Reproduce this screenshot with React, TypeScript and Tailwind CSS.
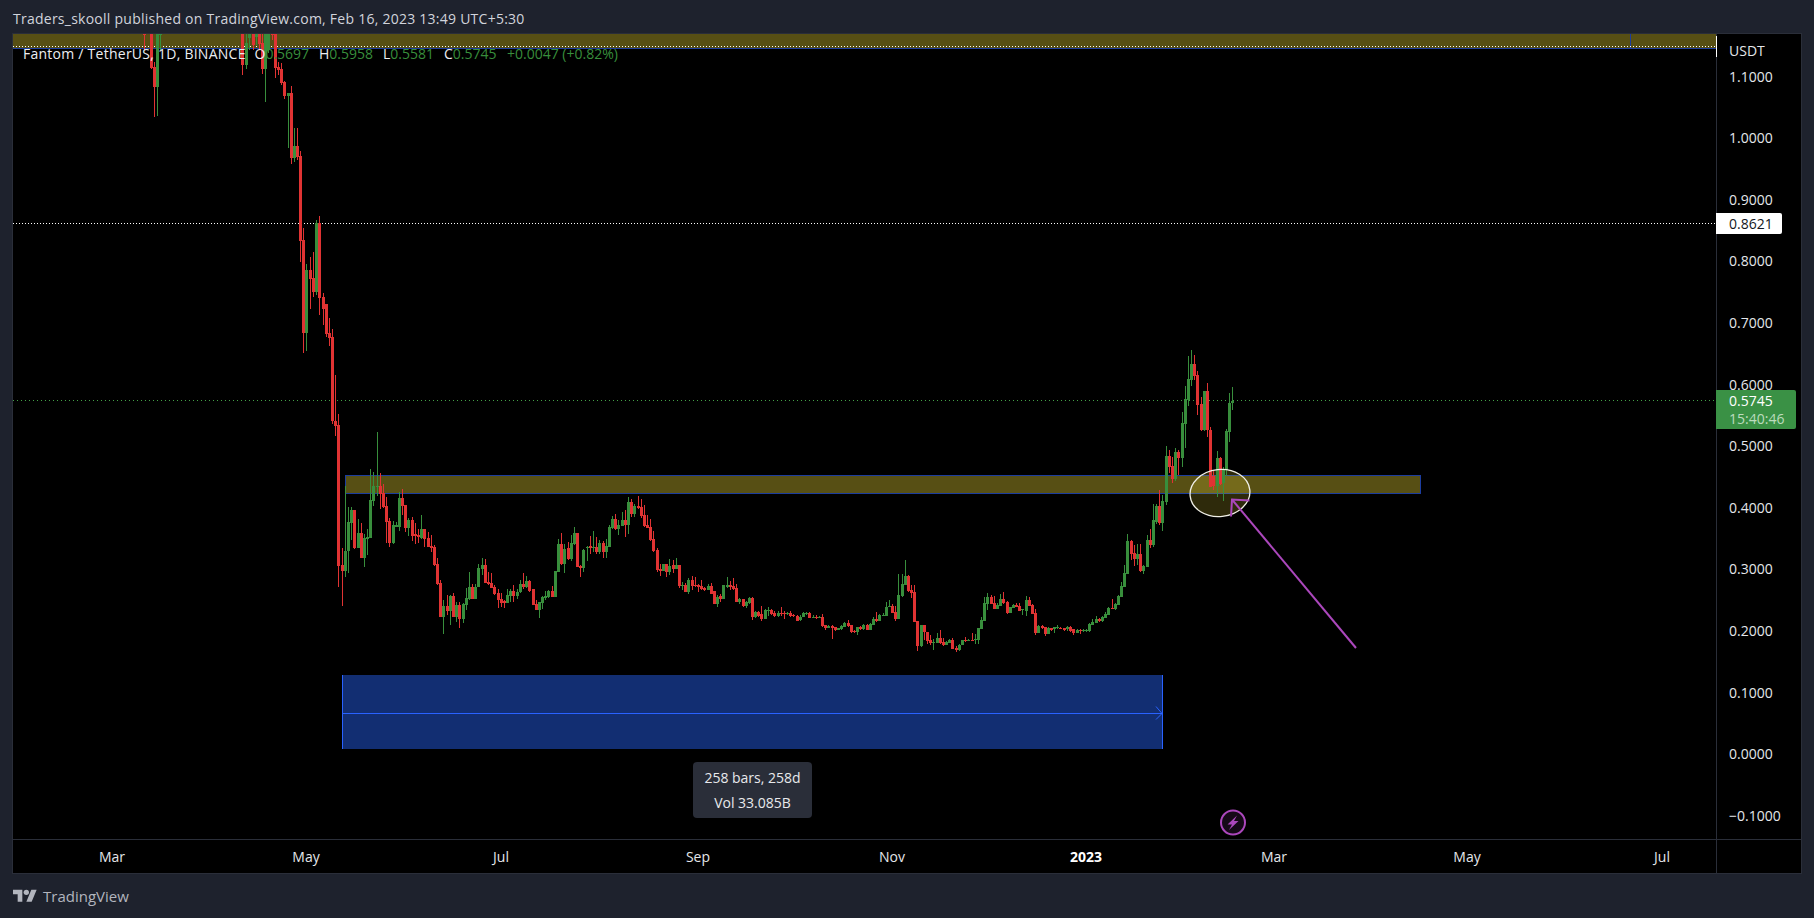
import React from "react";

const GROUPS: { ox: number; oy: number; d: string }[] = [
  {
    ox: 120,
    oy: 30,
    d: `72r 12 13 12 60;93r 12 114 12 118;102r 111 170 95 260;112g 12 170 12 258;121g 12 13 12 60;
368r 12 105 12 135;379g 40 105 12 118;388g 12 25 12 60;400r 12 45 12 60;409g 12 20 12 45;418r 12 42 12 60;427r 40 117 12 132;436g 12 117 12 215;445g 12 60 12 70;457r 12 13 12 30;466r 12 114 12 143;475r 111 120 96 135;484r 117 159 99 165;493r 156 198 153 207;505g 189 198 189 354;514r 189 384 168 402;523g 348 384 294 396;532r 348 381 294 390;541r 378 633 363 696;550r 630 908 594 968;559g 720 908 702 962;571r 720 747 681 837;580r 744 786 666 800;589g 579 786 570 795;598r 579 804 558 855;610r 801 837 789 885`,
  },
  {
    ox: 280,
    oy: 300,
    d: `139r 12 101 12 110;148r 99 113 55 137;157r 111 362 88 372;166r 363 377 225 407;175r 375 797 343 860;187r 796 812 745 917;196g 752 812 558 830;205g 667 752 622 818;214g 630 668 622 720;223r 630 744 630 748;236g 699 744 657 744;245r 699 773 670 775;254g 715 773 703 800;263g 711 716 687 765;271g 600 714 507 714;280g 558 603 516 617;292g 558 560 396 587;301r 558 582 519 627;310r 580 621 552 623;319r 618 666 591 728;328r 663 729 655 740;340g 676 729 663 731;350g 676 680 666 680;358g 595 680 576 692;367r 594 617 567 645;376r 615 684 615 697;385g 660 684 655 708;397r 660 708 652 722;406r 703 708 670 732;415r 705 711 688 728;424g 687 714 645 717;433r 687 717 687 740;445r 714 741 697 741;454r 738 743 706 755;463r 741 795 735 797;472r 792 852 775 855;481r 849 950 840 950;490g 918 950 900 1001;502r 918 933 885 945;511g 888 933 885 975;520r 888 951 880 950;529g 915 951 905 965;538r 915 957 905 983;549g 912 957 908 970;559g 894 914 865 930;568g 861 897 815 900;577r 861 897 852 897;586g 861 897 852 897;595g 804 860 793 860;606g 795 807 775 825;615r 795 849 778 850;624r 847 853 815 855;633r 850 864 820 865;642r 862 882 855 885;655r 880 900 868 923;664r 898 908 880 920;673r 903 908 900 923;682g 885 908 868 910;691g 873 888 868 905;700r 873 888 855 905;712g 876 888 868 898;721g 852 877 840 880;730r 852 861 820 868;739g 843 861 828 865;748r 843 873 840 875;760r 867 915 867 915;769r 912 930 900 930;778g 906 930 906 953;787g 891 909 888 926;796g 888 894 873 900;805g 873 891 870 895;817r 873 891 858 891;826g 813 891 813 891;835g 732 816 717 816;844r 732 792 699 795;853g 747 792 732 819;865r 744 777 727 780;874g 729 777 705 783;883g 699 732 681 735;892r 699 801 699 801;901r 798 804 795 831;910g 750 804 747 816;922g 740 744 738 783;931r 739 744 708 762;940g 741 744 693 756;949r 741 756 711 762;958g 729 756 720 762;970r 729 756 723 774;979g 739 756 717 774;988g 682 741 675 741;997g 657 684 648 687;1006r 657 687 642 690;1015g 676 687 660 705;1027g 660 678 636 678;1036r 660 675 630 711;1045g 606 675 591 702;1054r 606 642 597 651;1063g 618 642 612 651;1075r 618 624 588 627;1084r 621 648 597 654;1093r 645 678 615 681;1102r 675 684 645 684;1111r 681 720 657 723;1120r 717 753 693 756;1132r 750 810 744 816;1141r 807 813 792 828;1150g 792 813 792 813;1159r 792 816 792 832;1168g 798 816 777 825;1180r 795 807 780 819;1189g 795 807 774 807`,
  },
  {
    ox: 670,
    oy: 460,
    d: `10r 315 327 300 340;19g 315 327 294 327;28r 315 378 315 384;37g 375 379 366 390;46r 375 396 370 396;55g 360 396 354 402;67r 360 378 348 390;76r 375 379 352 380;85r 375 380 372 395;94r 378 387 360 390;103r 384 390 380 393;115g 378 390 372 390;124r 378 402 369 402;133r 393 432 393 432;142g 411 432 405 441;151r 408 417 402 426;160g 375 417 375 417;172g 375 380 351 384;181r 375 381 363 390;190r 378 387 354 390;199r 384 426 372 426;208g 417 426 414 432;220r 417 438 417 441;229g 426 438 423 444;238g 414 429 411 432;247r 414 471 411 480;256g 456 471 453 474;265r 456 468 453 471;274r 462 477 438 483;286g 450 477 447 477;295g 450 453 441 468;304r 450 462 447 465;313r 459 468 453 471;325g 459 468 453 471;334r 459 462 441 468;343r 459 462 453 477;352g 459 462 456 465;361r 459 468 453 471;370r 465 468 462 471;382r 468 483 465 483;391g 471 480 465 483;400g 459 471 456 471;409g 459 462 456 465;418r 459 474 456 474;430g 472 474 465 474;439r 471 474 465 477;448g 471 474 468 474;457r 471 498 462 501;466r 495 504 495 510;475g 498 504 495 504;487r 498 504 495 537;496r 501 510 501 513;505g 504 510 504 510;514g 498 507 495 510;523g 489 501 486 501;535r 489 498 480 501;544r 495 516 495 519;553r 513 516 510 519;562g 501 516 501 525;571r 501 507 498 510;580g 495 507 492 510;592r 495 510 492 510;601g 492 510 489 510;610g 477 495 471 495;619r 477 483 456 486;628g 465 483 462 483;640g 465 469 459 469;649g 441 468 426 468;658g 438 441 420 441;667r 438 459 432 459;676r 456 477 438 483;685g 405 477 342 477;697g 372 408 342 411;706g 348 375 300 375;715r 348 393 345 396;724r 390 399 375 414;733r 396 486 375 486;742r 483 558 483 573;754g 495 558 495 561;763r 495 516 495 540;772r 516 543 516 552;781r 540 549 525 555;790g 546 549 537 570;802g 534 549 519 549;811r 534 549 510 552;820r 546 555 534 558;829g 546 555 543 555;838g 540 549 537 549;847r 540 567 534 567;859r 564 570 558 576;868g 555 570 552 573;877g 540 555 540 555;886r 540 543 531 546;895g 539 543 537 543;907r 539 543 519 543;916g 537 540 522 552;925g 504 540 504 552;934g 480 507 471 507;943g 429 483 411 483;952g 411 432 399 450;964r 411 432 405 432;973r 429 447 408 447;982g 435 447 429 447;991g 417 438 402 438;1000r 417 429 396 432;1012r 426 459 423 462;1021g 441 459 441 459;1030g 435 444 432 444;1039r 435 441 429 441;1048r 438 453 429 453;1057g 448 451 447 465;1069g 420 453 408 468;1078r 420 438 411 438;1087r 435 462 432 462;1096r 459 519 447 525;1105g 498 519 495 519;1117r 498 504 495 507;1126r 501 522 501 528;1135g 504 522 501 522;1144r 504 510 504 513;1153g 501 507 501 519;1162g 501 504 495 507;1171r 504 507 501 507;1183r 504 510 504 513;1192g 501 507 498 513;1201r 501 513 498 516;1210r 507 519 507 525;1222g 510 519 507 519;1231r 510 513 507 522;1240g 510 513 507 516;1249g 510 513 507 516;1258g 492 513 489 516;1267g 486 495 477 495;1279g 477 489 468 489;1288r 477 483 474 486;1297g 471 483 468 486;1306g 462 474 456 474;1315g 444 465 441 465;1327r 444 447 417 447;1336g 432 447 429 450;1345g 408 435 405 435;1354g 378 411 366 411;1363g 339 381 315 381;1372g 243 342 222 342;1384r 243 282 240 300;1393r 279 297 255 318;1402g 282 297 252 315;1411r 282 333 252 336;1420g 318 333 315 342;1432g 240 321 225 321;1441r 240 255 207 264;1450g 180 255 132 258`,
  },
  {
    ox: 1150,
    oy: 340,
    d: `10g 540 600 492 620;20g 498 545 492 553;29r 498 548 450 555;37g 483 548 465 573;49g 348 486 318 495;58r 348 380 330 400;67r 378 417 350 428;76g 336 417 324 423;85r 336 354 330 405;97g 249 354 216 380;106g 177 251 138 324;115g 117 180 48 198;124g 72 120 30 138;133r 72 108 45 120;142r 105 195 93 225;154r 192 270 171 273;163g 153 270 153 273;172r 153 270 129 291;181r 270 442 262 442;190r 408 438 393 450;202g 354 438 333 471;211r 354 432 351 435;220g 387 430 380 483;229g 273 390 267 408;238g 189 276 159 306;247g 183 190 141 210`,
  },
];

type Candle = { x: number; up: boolean; t: number; b: number; wt: number; wb: number };

const CANDLES: Candle[] = GROUPS.flatMap((g) =>
  g.d
    .split(";")
    .map((s) => s.trim())
    .filter(Boolean)
    .map((s) => {
      const m = s.match(/^(\d+)([rg]) (\d+) (\d+) (\d+) (\d+)$/)!;
      return {
        x: Math.round(g.ox + Number(m[1]) / 3 - 0.5),
        up: m[2] === "g",
        t: Math.round(g.oy + Number(m[3]) / 3),
        b: Math.round(g.oy + Number(m[4]) / 3),
        wt: Math.round(g.oy + Number(m[5]) / 3),
        wb: Math.round(g.oy + Number(m[6]) / 3),
      };
    })
);

const RED = "#e03333";
const GREEN = "#388e3c";

function ChartDrawing() {
  return (
    <svg viewBox="13 34 1703 805" className="absolute inset-0 block h-full w-full">
      {/* top band */}
      <g shapeRendering="crispEdges">
        <rect x="13" y="34" width="1703" height="14" fill="#574f14" />
        <rect x="13" y="48" width="1703" height="1" fill="#1c3d9f" />
        <rect x="1630" y="34" width="1" height="14" fill="#1c3d9f" />
        {/* support band */}
        <rect x="345" y="475" width="1076" height="19" fill="#1c3d9f" />
        <rect x="346" y="476" width="1074" height="17" fill="#574f14" />
        {/* date and price range */}
        <rect x="342" y="675" width="821" height="74" fill="#122e72" />
        <rect x="342" y="675" width="1" height="74" fill="#2962ff" />
        <rect x="1162" y="675" width="1" height="74" fill="#2962ff" />
        <rect x="342" y="713" width="820" height="1" fill="#2962ff" />
      </g>
      <path d="M1156 706.5 L1162 713.5 L1156 719.5" fill="none" stroke="#2962ff" strokeWidth="1" />

      {/* horizontal levels */}
      <g fill="none" strokeWidth="1">
        <line x1="13" y1="46.5" x2="1716" y2="46.5" stroke="#ffffff" strokeDasharray="1 2" />
        <line x1="13" y1="223.5" x2="1716" y2="223.5" stroke="#ffffff" strokeDasharray="1 2" />
        <line x1="13" y1="400.5" x2="1716" y2="400.5" stroke="#43a047" strokeDasharray="1 3" />
      </g>

      {/* highlight circle */}
      <ellipse
        cx="1220"
        cy="493"
        rx="30"
        ry="23.5"
        transform="rotate(-6 1220 493)"
        fill="#ffeb3b"
        fillOpacity="0.18"
      />

      {/* candles */}
      <g shapeRendering="crispEdges">
        {CANDLES.map((c, i) => (
          <g key={i} fill={c.up ? GREEN : RED}>
            <rect x={c.x} y={c.wt} width="1" height={Math.max(1, c.wb - c.wt)} />
            <rect x={c.x - 1} y={c.t} width="3" height={Math.max(1, c.b - c.t)} />
          </g>
        ))}
      </g>

      <ellipse
        cx="1220"
        cy="493"
        rx="30"
        ry="23.5"
        transform="rotate(-6 1220 493)"
        fill="none"
        stroke="#f0efe6"
        strokeWidth="1.3"
      />

      {/* arrow */}
      <g fill="none" stroke="#ab47bc" strokeWidth="2">
        <line x1="1232" y1="499.5" x2="1356" y2="648" />
        <path d="M1249.5 500.5 L1232 499.5 L1231 516.5" />
      </g>

      {/* lightning mark */}
      <circle cx="1233" cy="822.5" r="12" fill="#ab47bc" fillOpacity="0.12" stroke="#ab47bc" strokeWidth="2" />
      <path d="M1237 815.5 L1227.5 824.5 L1232 824.5 L1229 830 L1238.5 821 L1234 821 Z" fill="#ab47bc" />
    </svg>
  );
}

function Legend() {
  return (
    <div className="absolute left-[10px] top-[11px] flex h-[18px] items-center text-[14px] leading-[18px] text-[#eceef2]">
      <span className="w-[231.5px] flex-none whitespace-nowrap tracking-[0.25px]">Fantom / TetherUS, 1D, BINANCE</span>
      <span className="flex w-[64.5px] flex-none">
        O<span className="text-[#388e3c]">0.5697</span>
      </span>
      <span className="flex w-[64px] flex-none">
        H<span className="text-[#388e3c]">0.5958</span>
      </span>
      <span className="flex w-[61px] flex-none">
        L<span className="text-[#388e3c]">0.5581</span>
      </span>
      <span className="flex w-[63px] flex-none">
        C<span className="text-[#388e3c]">0.5745</span>
      </span>
      <span className="whitespace-nowrap text-[#388e3c]">+0.0047 (+0.82%)</span>
    </div>
  );
}

const TICKS = ["1.1000", "1.0000", "0.9000", "0.8000", "0.7000", "0.6000", "0.5000", "0.4000", "0.3000", "0.2000", "0.1000", "0.0000", "\u22120.1000"];

function PriceAxis() {
  return (
    <div className="relative w-[85px] flex-none border-l border-[#2a2e39] pl-[12px] text-[14px] leading-[18px] text-[#e4e6ea]">
      <div className="absolute -left-px top-[2px] h-[21px] w-px bg-white" />
      <div className="h-[33.7px] pt-[8px]">USDT</div>
      {TICKS.map((t) => (
        <div key={t} className="h-[61.6px]">
          {t}
        </div>
      ))}
      <div className="absolute -left-px top-[179px] flex h-[21px] w-[66px] items-center rounded-r-[2px] bg-white pl-[13px] text-[#131722]">
        0.8621
      </div>
      <div className="absolute -left-px top-[356px] flex h-[39px] w-[80px] flex-col justify-center rounded-r-[2px] bg-[#3a9145] pl-[13px] text-white">
        <div>0.5745</div>
        <div className="text-[#bcdcbe]">15:40:46</div>
      </div>
    </div>
  );
}

function TimeAxis() {
  const cell = "flex-none text-center";
  return (
    <div className="flex h-[34px] flex-none border-t border-[#2a2e39] text-[14px] leading-[33px] text-[#e4e6ea]">
      <div className="flex w-[1703px] flex-none">
        <div className={`${cell} w-[198px]`}>Mar</div>
        <div className={`${cell} w-[190px]`}>May</div>
        <div className={`${cell} w-[200px]`}>Jul</div>
        <div className={`${cell} w-[194px]`}>Sep</div>
        <div className={`${cell} w-[194px]`}>Nov</div>
        <div className={`${cell} w-[194px] font-bold text-white`}>2023</div>
        <div className={`${cell} w-[182px]`}>Mar</div>
        <div className={`${cell} w-[204px]`}>May</div>
        <div className={`${cell} ml-[39px] w-[108px]`}>Jul</div>
      </div>
      <div className="flex-1 border-l border-[#2a2e39]" />
    </div>
  );
}

function Logo() {
  return (
    <svg viewBox="0 0 36 28" className="block h-[18.67px] w-[24px] flex-none" fill="#b2b5be">
      <path d="M14 22H7V11H0V4h14v18zM28 22h-8l7.5-18h8L28 22z" />
      <circle cx="20" cy="8" r="4" />
    </svg>
  );
}

export default function App() {
  return (
    <div className="flex h-[918px] w-full flex-col overflow-hidden bg-[#1e222d] font-['Open_Sans','Noto_Sans',sans-serif] text-[14px]">
      <div className="flex h-[33px] flex-none items-center pl-[13px] pt-[4px] text-[14px] tracking-[0.25px] text-[#d1d4dc]">
        Traders_skooll published on TradingView.com, Feb 16, 2023 13:49 UTC+5:30
      </div>
      <div className="ml-[12px] flex w-[1790px] flex-none flex-col border border-[#2a2e39] bg-black">
        <div className="flex h-[805px] flex-none">
          <div className="relative w-[1703px] flex-none overflow-hidden">
            <ChartDrawing />
            <Legend />
            <div className="absolute left-[680px] top-[728px] flex h-[56px] w-[119px] flex-col items-center justify-center gap-[7px] rounded-[4px] bg-[#2a2e39] text-[14px] leading-[18px] text-[#e8e9ec]">
              <div>258 bars, 258d</div>
              <div>Vol 33.085B</div>
            </div>
          </div>
          <PriceAxis />
        </div>
        <TimeAxis />
      </div>
      <div className="flex flex-1 items-center gap-[6px] pl-[13px]">
        <Logo />
        <span className="text-[15px] text-[#b2b5be]">TradingView</span>
      </div>
    </div>
  );
}
